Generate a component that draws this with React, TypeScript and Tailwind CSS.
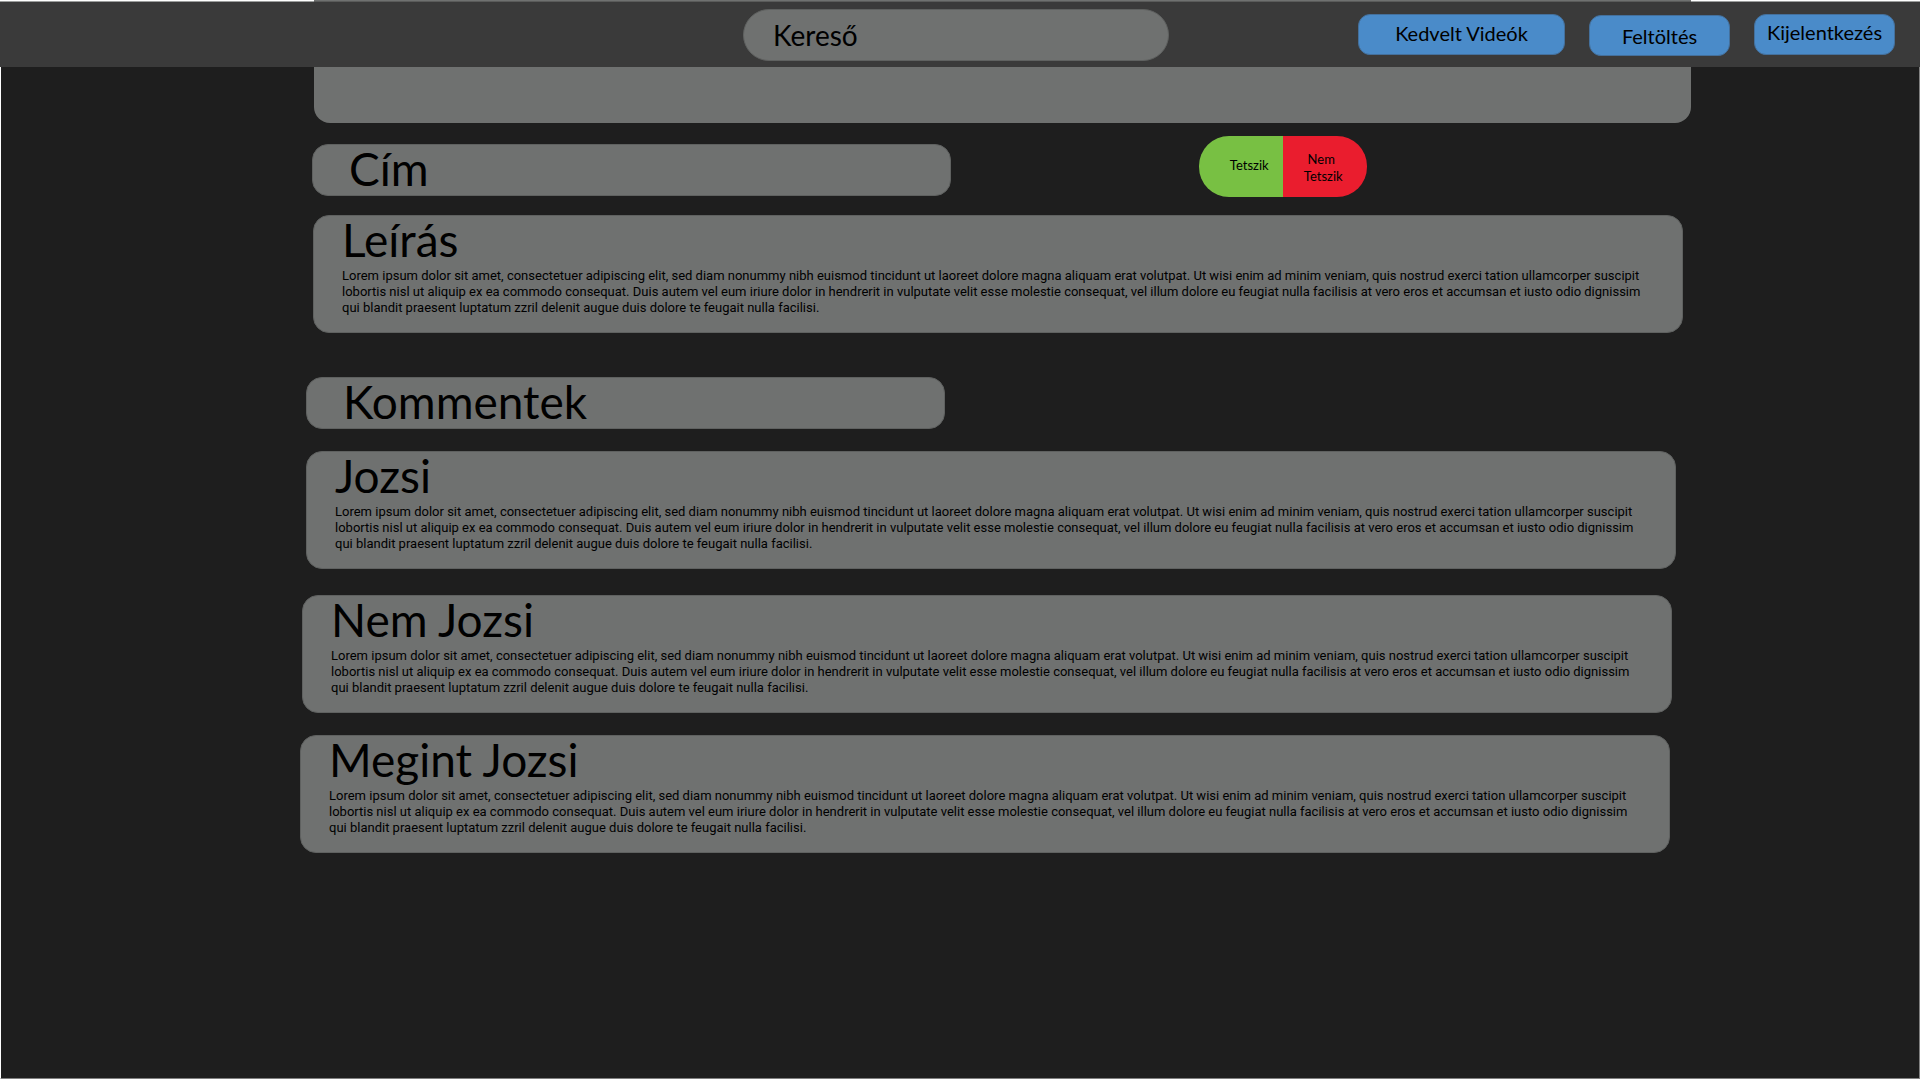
import type { ReactNode } from 'react';

const LINES = [
  'Lorem ipsum dolor sit amet, consectetuer adipiscing elit, sed diam nonummy nibh euismod tincidunt ut laoreet dolore magna aliquam erat volutpat. Ut wisi enim ad minim veniam, quis nostrud exerci tation ullamcorper suscipit',
  'lobortis nisl ut aliquip ex ea commodo consequat. Duis autem vel eum iriure dolor in hendrerit in vulputate velit esse molestie consequat, vel illum dolore eu feugiat nulla facilisis at vero eros et accumsan et iusto odio dignissim',
  'qui blandit praesent luptatum zzril delenit augue duis dolore te feugait nulla facilisi.',
];

function TextCard({ title, className }: { title: string; className: string }) {
  return (
    <article className={`rounded-2xl border border-[#5f6160] bg-[#6f7170] px-7 pb-4 ${className}`}>
      <h2 className="text-[46px] leading-12">{title}</h2>
      <p className="mt-1 font-[Roboto,sans-serif] text-[13px] leading-4">
        {LINES.map((line) => (
          <span key={line} className="block">
            {line}
          </span>
        ))}
      </p>
    </article>
  );
}

function TitleBar({ children, className }: { children: ReactNode; className: string }) {
  return (
    <div className={`w-[639px] rounded-2xl border border-[#5f6160] bg-[#6f7170] pb-0.5 pl-9 ${className}`}>
      <h2 className="text-[46px] leading-12">{children}</h2>
    </div>
  );
}

function NavButton({ children, className }: { children: ReactNode; className: string }) {
  return (
    <button
      type="button"
      className={`h-[41px] rounded-xl border border-[#44709c] bg-[#4a8bc9] text-center text-xl leading-6 ${className}`}
    >
      {children}
    </button>
  );
}

export default function App() {
  return (
    <div className="flex min-h-screen flex-col bg-[#1e1e1e] font-[Lato,sans-serif] text-black [font-variant-ligatures:none]">
      <div className="flex h-0.5 border-b border-[#9c9e9d] bg-white pr-[229px] pl-[314px]">
        <div className="-mb-px h-0.5 flex-1 border-b border-[#5a5b5a] bg-[#6f7170]" />
      </div>
      <header className="grid h-[65px] grid-cols-[743fr_426fr_751fr] bg-[#3a3a3a]">
        <div />
        <input
          type="search"
          aria-label="Kereső"
          placeholder="Kereső"
          className="mt-[7px] h-[52px] w-full appearance-none rounded-[26px] border border-[#5f6160] bg-[#6f7170] px-[29px] text-[28px] outline-none placeholder:text-black placeholder:opacity-100"
        />
        <nav className="flex items-start justify-end gap-6 pt-3 pr-[25px]">
          <NavButton className="w-[207px] pb-1">Kedvelt Videók</NavButton>
          <NavButton className="mt-px w-[141px]">Feltöltés</NavButton>
          <NavButton className="w-[141px] pb-1.5">Kijelentkezés</NavButton>
        </nav>
      </header>

      <main className="flex flex-1 flex-col border-x border-b border-[#808080] border-l-white pr-[228px] pl-[299px]">
        <div className="ml-3.5 h-14 rounded-b-2xl bg-[#6f7170]" />

        <div className="mt-[13px] ml-3 flex items-start">
          <TitleBar className="mt-2">Cím</TitleBar>
          <div className="ml-[18%] flex h-[61px] text-[13px] leading-[17px]">
            <button type="button" className="w-[84px] rounded-l-[30px] bg-[#78c043] pb-0.5 pl-4 text-center">
              Tetszik
            </button>
            <button type="button" className="w-[84px] rounded-r-[30px] bg-[#ea1d2e] pt-0.5 pr-1 text-center">
              <span className="block pr-1">Nem</span>
              <span className="block">Tetszik</span>
            </button>
          </div>
        </div>

        <TextCard title="Leírás" className="mt-[18px] mr-2 ml-[13px]" />

        <TitleBar className="mt-11 ml-1.5">Kommentek</TitleBar>

        <section aria-label="Kommentek" className="flex flex-col">
          <TextCard title="Jozsi" className="mt-[22px] mr-[15px] ml-1.5" />
          <TextCard title="Nem Jozsi" className="mt-[26px] mr-[19px] ml-0.5" />
          <TextCard title="Megint Jozsi" className="mt-[22px] mr-[21px]" />
        </section>
      </main>
      <div className="h-px bg-white" />
    </div>
  );
}
